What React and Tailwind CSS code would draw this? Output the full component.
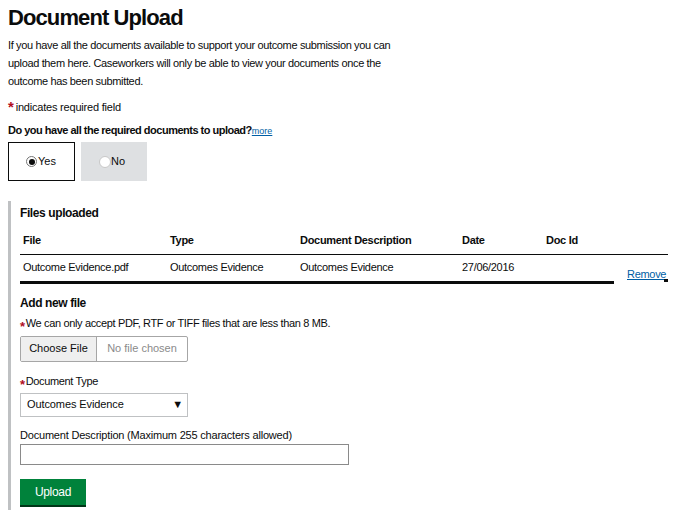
import React from "react";

const Star = () => (
  <span className="text-[#b10e1e] text-[13px] font-bold leading-none mr-[1px] relative top-[4px]">*</span>
);

export default function App() {
  return (
    <div className="bg-white text-[#0b0c0c] px-2 pt-[4px] pb-[6px] font-['Liberation_Sans',Arial,sans-serif]">
      <h1 className="text-[22px] font-bold leading-[28px] tracking-[-0.9px]">Document Upload</h1>

      <p className="mt-[4px] text-[11px] leading-[18px] tracking-[-0.35px] w-[392px]">
        If you have all the documents available to support your outcome submission you can upload them here.
        Caseworkers will only be able to view your documents once the outcome has been submitted.
      </p>

      <p className="mt-[8px] text-[11px] leading-[18px] tracking-[-0.2px]">
        <span className="text-[#b10e1e] text-[15px] font-bold leading-none relative top-[1px] mr-[2px]">*</span>
        indicates required field
      </p>

      <p className="mt-[5px] text-[11px] leading-[18px] font-bold tracking-[-0.5px]">
        Do you have all the required documents to upload?
        <a href="#" className="font-normal text-[9px] text-[#005ea5] underline tracking-normal">more</a>
      </p>

      <div className="mt-[2px] flex gap-[6px]">
        <label className="w-[67px] h-[39px] border border-[#0b0c0c] flex items-center pl-[17px] text-[11px]">
          <span className="w-[11px] h-[11px] rounded-full border border-[#767676] bg-white flex items-center justify-center">
            <span className="w-[6px] h-[6px] rounded-full bg-[#0b0c0c]" />
          </span>
          <span className="ml-[1px]">Yes</span>
        </label>
        <label className="w-[66px] h-[39px] bg-[#dee0e2] flex items-center pl-[18px] text-[11px]">
          <span className="w-[12px] h-[12px] rounded-full border border-[#c8c8c8] bg-white" />
          <span>No</span>
        </label>
      </div>

      <div className="mt-[20px] border-l-[3px] border-[#bfc1c3] pl-[9px] pb-[3px]">
        <h2 className="pt-[3px] text-[12px] font-bold leading-[18px] tracking-[-0.4px]">Files uploaded</h2>

        <table className="mt-[10px] w-[648px] table-fixed text-[11px] tracking-[-0.3px] border-collapse">
          <thead>
            <tr className="h-[22px] border-b border-[#0b0c0c]">
              <th className="text-left font-bold pl-[3px] w-[150px] align-top">File</th>
              <th className="text-left font-bold w-[130px] align-top">Type</th>
              <th className="text-left font-bold w-[162px] align-top">Document Description</th>
              <th className="text-left font-bold w-[84px] align-top">Date</th>
              <th className="text-left font-bold w-[68px] align-top">Doc Id</th>
              <th className="w-[54px]" />
            </tr>
          </thead>
          <tbody>
            <tr className="h-[28px]">
              <td className="pl-[3px] border-b-[3px] border-[#0b0c0c] align-middle">Outcome Evidence.pdf</td>
              <td className="border-b-[3px] border-[#0b0c0c] align-middle">Outcomes Evidence</td>
              <td className="border-b-[3px] border-[#0b0c0c] align-middle">Outcomes Evidence</td>
              <td className="border-b-[3px] border-[#0b0c0c] align-middle">27/06/2016</td>
              <td className="border-b-[3px] border-[#0b0c0c]" />
              <td className="align-middle relative pl-[13px]">
                <a href="#" className="text-[#005ea5] underline relative top-[6px]">Remove</a>
                <span className="absolute right-0 bottom-0 w-[4px] h-[3px] bg-[#0b0c0c]" />
              </td>
            </tr>
          </tbody>
        </table>

        <h2 className="mt-[10px] text-[12px] font-bold leading-[18px] tracking-[-0.4px]">Add new file</h2>

        <p className="mt-[3px] text-[11px] leading-[16px] tracking-[-0.35px] flex items-center">
          <Star />
          We can only accept PDF, RTF or TIFF files that are less than 8 MB.
        </p>

        <div className="mt-[5px] flex w-[168px] h-[26px] border border-[#a6a6a6] rounded-[2px] text-[11px]">
          <span className="w-[76px] bg-[#efefef] border-r border-[#a6a6a6] flex items-center justify-center">Choose File</span>
          <span className="flex-1 flex items-center justify-center text-[#8a8a8a]">No file chosen</span>
        </div>

        <p className="mt-[11px] text-[11px] leading-[16px] tracking-[-0.35px] flex items-center">
          <Star />
          Document Type
        </p>

        <div className="mt-[4px] w-[168px] h-[24px] border border-[#bfc1c3] flex items-center justify-between pl-[6px] pr-[4px] text-[11px] tracking-[-0.1px]">
          <span>Outcomes Evidence</span>
          <span className="text-[11px]">▼</span>
        </div>

        <p className="mt-[10px] text-[11px] leading-[16px] tracking-[-0.2px]">
          Document Description (Maximum 255 characters allowed)
        </p>

        <div className="mt-[1px] w-[329px] h-[21px] border border-[#8a8a8a]" />

        <button className="mt-[14px] w-[66px] h-[28px] bg-[#00823b] border-b-[2px] border-[#003618] text-white text-[12px] tracking-[-0.3px]">
          Upload
        </button>
      </div>
    </div>
  );
}
